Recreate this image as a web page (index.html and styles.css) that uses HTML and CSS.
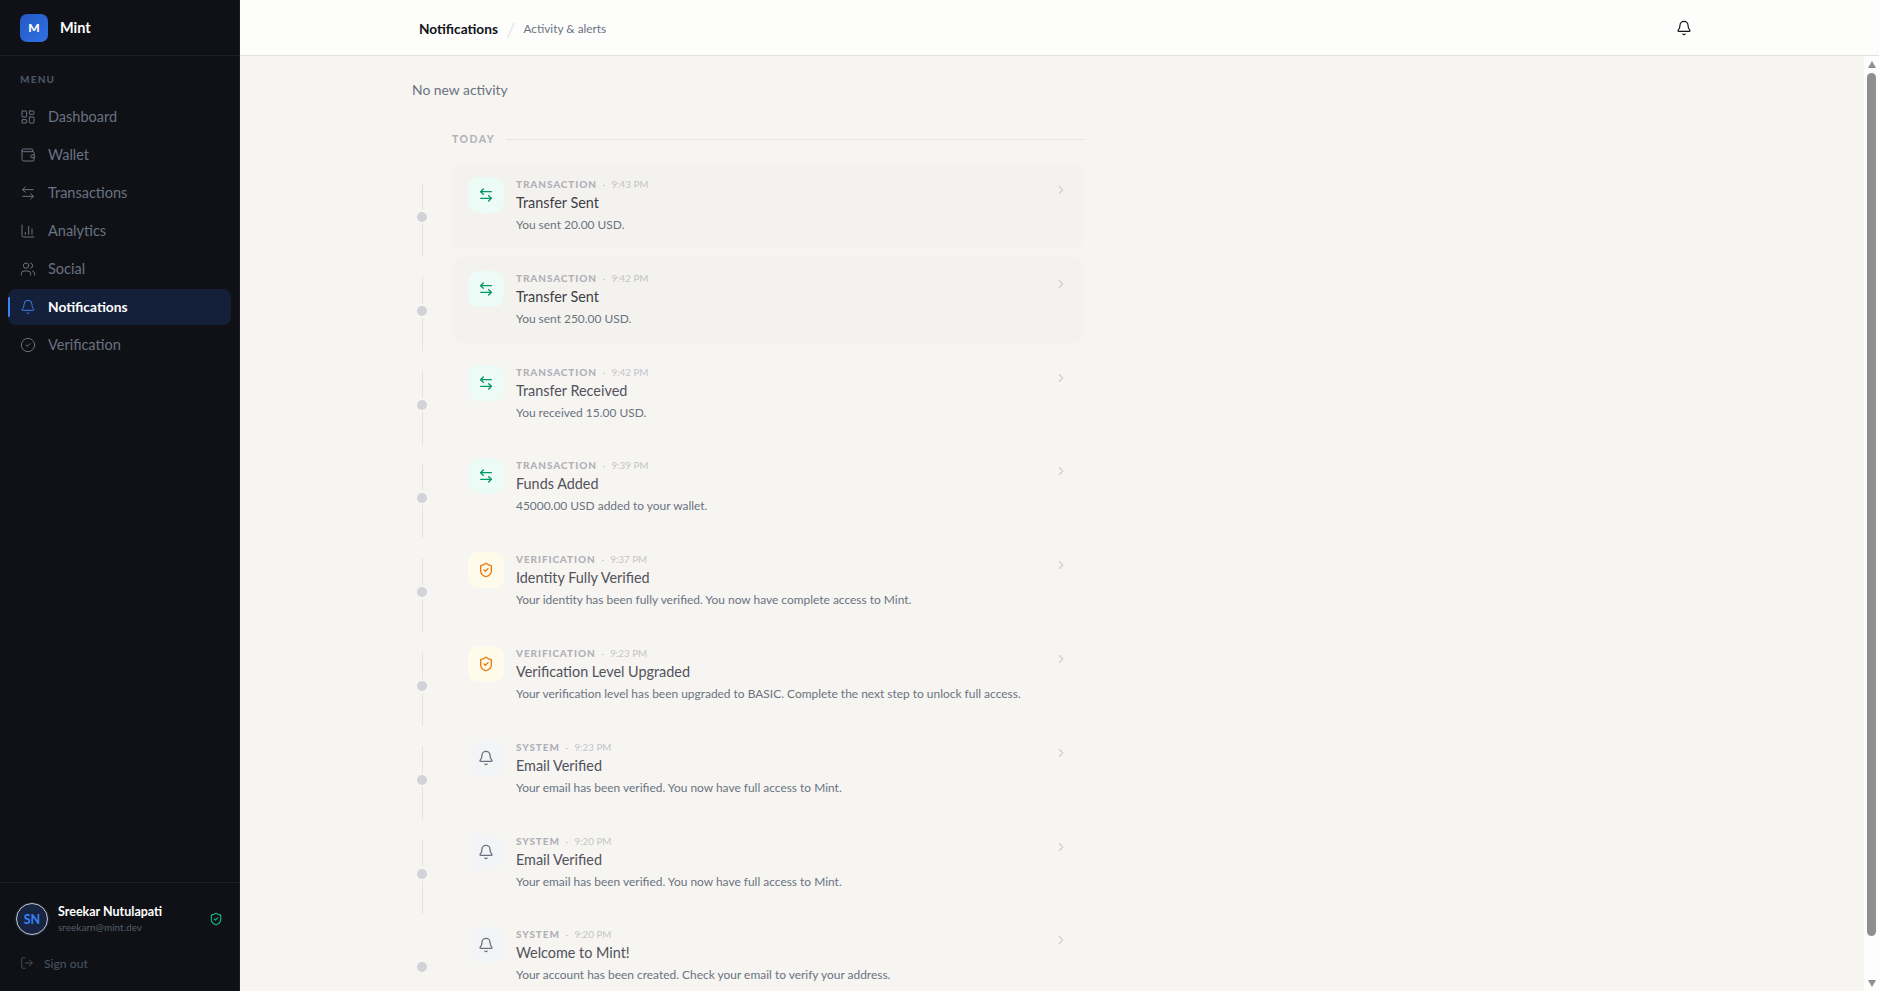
FILE: index.html
```html
<!DOCTYPE html>
<html lang="en">
<head>
<meta charset="utf-8">
<title>Mint - Notifications</title>
<link rel="stylesheet" href="styles.css">
</head>
<body>
<svg class="defs" width="0" height="0" aria-hidden="true">
  <symbol id="i-dash" viewBox="0 0 24 24"><rect x="3" y="3" width="7" height="9" rx="1"/><rect x="14" y="3" width="7" height="5" rx="1"/><rect x="14" y="12" width="7" height="9" rx="1"/><rect x="3" y="16" width="7" height="5" rx="1"/></symbol>
  <symbol id="i-wallet" viewBox="0 0 24 24"><path d="M19 7V4a1 1 0 0 0-1-1H5a2 2 0 0 0 0 4h15a1 1 0 0 1 1 1v4h-3a2 2 0 0 0 0 4h3a1 1 0 0 0 1-1v-2a1 1 0 0 0-1-1"/><path d="M3 5v14a2 2 0 0 0 2 2h15a1 1 0 0 0 1-1v-4"/></symbol>
  <symbol id="i-swap" viewBox="0 0 24 24"><path d="M8 3 4 7l4 4"/><path d="M4 7h16"/><path d="m16 21 4-4-4-4"/><path d="M20 17H4"/></symbol>
  <symbol id="i-chart" viewBox="0 0 24 24"><path d="M3 3v16a2 2 0 0 0 2 2h16"/><path d="M18 17V9"/><path d="M13 17V5"/><path d="M8 17v-3"/></symbol>
  <symbol id="i-users" viewBox="0 0 24 24"><path d="M16 21v-2a4 4 0 0 0-4-4H6a4 4 0 0 0-4 4v2"/><circle cx="9" cy="7" r="4"/><path d="M22 21v-2a4 4 0 0 0-3-3.87"/><path d="M16 3.13a4 4 0 0 1 0 7.75"/></symbol>
  <symbol id="i-bell" viewBox="0 0 24 24"><path d="M10.268 21a2 2 0 0 0 3.464 0"/><path d="M3.262 15.326A1 1 0 0 0 4 17h16a1 1 0 0 0 .74-1.673C19.41 13.956 18 12.499 18 8A6 6 0 0 0 6 8c0 4.499-1.411 5.956-2.738 7.326"/></symbol>
  <symbol id="i-check" viewBox="0 0 24 24"><circle cx="12" cy="12" r="10"/><path d="m9 12 2 2 4-4"/></symbol>
  <symbol id="i-shield" viewBox="0 0 24 24"><path d="M20 13c0 5-3.5 7.5-7.66 8.95a1 1 0 0 1-.67-.01C7.5 20.5 4 18 4 13V6a1 1 0 0 1 1-1c2 0 4.5-1.2 6.24-2.72a1.17 1.17 0 0 1 1.52 0C14.51 3.81 17 5 19 5a1 1 0 0 1 1 1z"/><path d="m9 12 2 2 4-4"/></symbol>
  <symbol id="i-out" viewBox="0 0 24 24"><path d="M9 21H5a2 2 0 0 1-2-2V5a2 2 0 0 1 2-2h4"/><path d="m16 17 5-5-5-5"/><path d="M21 12H9"/></symbol>
  <symbol id="i-chev" viewBox="0 0 24 24"><path d="m9 18 6-6-6-6"/></symbol>
</svg>
<div class="app">
  <aside class="sidebar">
    <div class="brand"><span class="logo">M</span><span class="brand-name">Mint</span></div>
    <nav class="nav">
      <div class="nav-label">MENU</div>
      <a class="nav-item"><svg class="ico"><use href="#i-dash"/></svg>Dashboard</a>
      <a class="nav-item"><svg class="ico"><use href="#i-wallet"/></svg>Wallet</a>
      <a class="nav-item"><svg class="ico"><use href="#i-swap"/></svg>Transactions</a>
      <a class="nav-item"><svg class="ico"><use href="#i-chart"/></svg>Analytics</a>
      <a class="nav-item"><svg class="ico"><use href="#i-users"/></svg>Social</a>
      <a class="nav-item active"><svg class="ico"><use href="#i-bell"/></svg>Notifications</a>
      <a class="nav-item"><svg class="ico"><use href="#i-check"/></svg>Verification</a>
    </nav>
    <div class="foot">
      <div class="user">
        <span class="avatar">SN</span>
        <div class="user-text">
          <div class="user-name">Sreekar Nutulapati</div>
          <div class="user-mail">sreekarn@mint.dev</div>
        </div>
        <svg class="ico ico-green"><use href="#i-shield"/></svg>
      </div>
      <a class="signout"><svg class="ico ico-sm"><use href="#i-out"/></svg>Sign out</a>
    </div>
  </aside>
  <div class="right">
    <header class="top">
      <div class="top-inner">
        <span class="crumb">Notifications</span>
        <span class="slash">/</span>
        <span class="crumb-sub">Activity &amp; alerts</span>
        <svg class="ico top-bell"><use href="#i-bell"/></svg>
      </div>
    </header>
    <div class="body">
      <main class="main">
        <p class="status">No new activity</p>
        <div class="feed">
          <div class="day"><span class="day-label">TODAY</span><span class="day-line"></span></div>

          <div class="row">
            <div class="rail"><span class="seg seg-a"></span><span class="dot"></span><span class="seg seg-b"></span></div>
            <article class="card unread">
              <span class="tile tile-green"><svg class="ico"><use href="#i-swap"/></svg></span>
              <div class="txt">
                <div class="meta"><span class="kind">TRANSACTION</span><span class="sep">·</span><span class="time">9:43 PM</span></div>
                <h3 class="title">Transfer Sent</h3>
                <p class="desc">You sent 20.00 USD.</p>
              </div>
              <svg class="ico chev"><use href="#i-chev"/></svg>
            </article>
          </div>

          <div class="row">
            <div class="rail"><span class="seg seg-a"></span><span class="dot"></span><span class="seg seg-b"></span></div>
            <article class="card unread">
              <span class="tile tile-green"><svg class="ico"><use href="#i-swap"/></svg></span>
              <div class="txt">
                <div class="meta"><span class="kind">TRANSACTION</span><span class="sep">·</span><span class="time">9:42 PM</span></div>
                <h3 class="title">Transfer Sent</h3>
                <p class="desc">You sent 250.00 USD.</p>
              </div>
              <svg class="ico chev"><use href="#i-chev"/></svg>
            </article>
          </div>

          <div class="row">
            <div class="rail"><span class="seg seg-a"></span><span class="dot"></span><span class="seg seg-b"></span></div>
            <article class="card">
              <span class="tile tile-green"><svg class="ico"><use href="#i-swap"/></svg></span>
              <div class="txt">
                <div class="meta"><span class="kind">TRANSACTION</span><span class="sep">·</span><span class="time">9:42 PM</span></div>
                <h3 class="title">Transfer Received</h3>
                <p class="desc">You received 15.00 USD.</p>
              </div>
              <svg class="ico chev"><use href="#i-chev"/></svg>
            </article>
          </div>

          <div class="row">
            <div class="rail"><span class="seg seg-a"></span><span class="dot"></span><span class="seg seg-b"></span></div>
            <article class="card">
              <span class="tile tile-green"><svg class="ico"><use href="#i-swap"/></svg></span>
              <div class="txt">
                <div class="meta"><span class="kind">TRANSACTION</span><span class="sep">·</span><span class="time">9:39 PM</span></div>
                <h3 class="title">Funds Added</h3>
                <p class="desc">45000.00 USD added to your wallet.</p>
              </div>
              <svg class="ico chev"><use href="#i-chev"/></svg>
            </article>
          </div>

          <div class="row">
            <div class="rail"><span class="seg seg-a"></span><span class="dot"></span><span class="seg seg-b"></span></div>
            <article class="card">
              <span class="tile tile-amber"><svg class="ico"><use href="#i-shield"/></svg></span>
              <div class="txt">
                <div class="meta"><span class="kind">VERIFICATION</span><span class="sep">·</span><span class="time">9:37 PM</span></div>
                <h3 class="title">Identity Fully Verified</h3>
                <p class="desc">Your identity has been fully verified. You now have complete access to Mint.</p>
              </div>
              <svg class="ico chev"><use href="#i-chev"/></svg>
            </article>
          </div>

          <div class="row">
            <div class="rail"><span class="seg seg-a"></span><span class="dot"></span><span class="seg seg-b"></span></div>
            <article class="card">
              <span class="tile tile-amber"><svg class="ico"><use href="#i-shield"/></svg></span>
              <div class="txt">
                <div class="meta"><span class="kind">VERIFICATION</span><span class="sep">·</span><span class="time">9:23 PM</span></div>
                <h3 class="title">Verification Level Upgraded</h3>
                <p class="desc">Your verification level has been upgraded to BASIC. Complete the next step to unlock full access.</p>
              </div>
              <svg class="ico chev"><use href="#i-chev"/></svg>
            </article>
          </div>

          <div class="row">
            <div class="rail"><span class="seg seg-a"></span><span class="dot"></span><span class="seg seg-b"></span></div>
            <article class="card">
              <span class="tile tile-gray"><svg class="ico"><use href="#i-bell"/></svg></span>
              <div class="txt">
                <div class="meta"><span class="kind">SYSTEM</span><span class="sep">·</span><span class="time">9:23 PM</span></div>
                <h3 class="title">Email Verified</h3>
                <p class="desc">Your email has been verified. You now have full access to Mint.</p>
              </div>
              <svg class="ico chev"><use href="#i-chev"/></svg>
            </article>
          </div>

          <div class="row">
            <div class="rail"><span class="seg seg-a"></span><span class="dot"></span><span class="seg seg-b"></span></div>
            <article class="card">
              <span class="tile tile-gray"><svg class="ico"><use href="#i-bell"/></svg></span>
              <div class="txt">
                <div class="meta"><span class="kind">SYSTEM</span><span class="sep">·</span><span class="time">9:20 PM</span></div>
                <h3 class="title">Email Verified</h3>
                <p class="desc">Your email has been verified. You now have full access to Mint.</p>
              </div>
              <svg class="ico chev"><use href="#i-chev"/></svg>
            </article>
          </div>

          <div class="row">
            <div class="rail"><span class="seg seg-a seg-none"></span><span class="dot"></span></div>
            <article class="card">
              <span class="tile tile-gray"><svg class="ico"><use href="#i-bell"/></svg></span>
              <div class="txt">
                <div class="meta"><span class="kind">SYSTEM</span><span class="sep">·</span><span class="time">9:20 PM</span></div>
                <h3 class="title">Welcome to Mint!</h3>
                <p class="desc">Your account has been created. Check your email to verify your address.</p>
              </div>
              <svg class="ico chev"><use href="#i-chev"/></svg>
            </article>
          </div>
        </div>
      </main>
      <div class="scrollbar" aria-hidden="true">
        <span class="arrow arrow-up"></span>
        <span class="thumb"></span>
        <span class="arrow arrow-down"></span>
      </div>
    </div>
  </div>
</div>
</body>
</html>
```
FILE: styles.css
```css
* { box-sizing: border-box; }
html, body { height: 100%; margin: 0; overflow: hidden; }
body { font-family: "Lato", "Noto Sans", sans-serif; background: #f6f5f2; color: #3f3f46; }
.defs { position: absolute; }
a { display: flex; text-decoration: none; }
h3, p { margin: 0; }

.ico { width: 16px; height: 16px; flex: none; fill: none; stroke: currentColor; stroke-width: 1.5; stroke-linecap: round; stroke-linejoin: round; }

.app { display: flex; height: 991px; }

/* sidebar */
.sidebar { width: 240px; flex: none; display: flex; flex-direction: column; background: #0f1117; border-right: 1px solid #1a1c26; }
.brand { height: 56px; flex: none; display: flex; align-items: center; gap: 12px; padding-left: 20px; border-bottom: 1px solid #1d1f2b; }
.logo { width: 28px; height: 28px; border-radius: 7px; display: flex; align-items: center; justify-content: center; background: linear-gradient(135deg, #2358c4, #3171e4); color: #fff; font-size: 12px; font-weight: 900; }
.brand-name { color: #fff; font-size: 14.5px; font-weight: 700; }
.nav { flex: 1; display: flex; flex-direction: column; gap: 2px; padding: 16px 8px 0; }
.nav-label { height: 15px; line-height: 15px; margin: 0 0 9.5px 12px; color: #4b5563; font-size: 10px; font-weight: 900; letter-spacing: .12em; }
.nav-item { height: 36px; display: flex; align-items: center; gap: 12px; padding-left: 12px; border-radius: 8px; color: #6b7280; font-size: 14.5px; position: relative; }
.nav-item.active { background: #14203a; color: #fff; font-size: 13.8px; font-weight: 700; }
.nav-item.active .ico { color: #3b82f6; }
.nav-item.active::before { content: ""; position: absolute; left: 0; top: 8px; width: 2px; height: 20px; border-radius: 2px; background: #3b82f6; }

.foot { height: 109px; flex: none; border-top: 1px solid #1f2030; padding: 19px 16px 0; }
.user { display: flex; align-items: center; gap: 10px; height: 34px; }
.avatar { width: 32px; height: 32px; flex: none; border-radius: 50%; display: flex; align-items: center; justify-content: center; background: #172542; border: 1px solid #c4c7cf; box-shadow: 0 0 0 1px #1d2030; color: #3b82f6; font-size: 12.5px; font-weight: 700; }
.user-text { flex: 1; min-width: 0; }
.user-name { color: #fff; font-size: 12.5px; font-weight: 700; line-height: 16px; }
.user-mail { color: #565e6b; font-size: 10px; line-height: 14px; }
.ico-green { width: 14px; height: 14px; color: #10b981; stroke-width: 2; }
.signout { align-items: center; gap: 10px; margin-top: 17px; padding-left: 4px; height: 20px; color: #4b5563; font-size: 12.2px; }
.ico-sm { width: 14px; height: 14px; }

/* top bar */
.right { flex: 1; min-width: 0; display: flex; flex-direction: column; }
.top { height: 56px; flex: none; background: #fdfdfc; border-bottom: 1px solid #e4e2de; padding-right: 15px; }
.top-inner { width: 1280px; height: 55px; margin: 0 auto; padding: 2px 0 0 7px; display: flex; align-items: center; }
.crumb { color: #111318; font-size: 13.7px; font-weight: 700; }
.slash { width: 25.6px; text-align: center; color: #d9d8d4; font-size: 20px; font-weight: 300; }
.crumb-sub { color: #6b7280; font-size: 11.8px; }
.top-bell { margin: -2px 0 0 auto; color: #111318; stroke-width: 1.75; }

/* body */
.body { flex: 1; min-height: 0; display: flex; }
.main { flex: 1; min-width: 0; overflow: hidden; padding: 0 172px; }
.status { margin-top: 25px; height: 18px; line-height: 18px; color: #6b7280; font-size: 13.9px; }
.feed { width: 672px; margin-top: 28px; }
.day { height: 24px; margin: 0 0 12px 40px; display: flex; align-items: center; gap: 11px; }
.day-label { color: #b4b4ba; font-size: 10.5px; font-weight: 900; letter-spacing: .14em; }
.day-line { flex: 1; height: 1px; background: #e6e5e1; }

.row { display: flex; height: 93.8px; }
.rail { width: 20px; flex: none; margin-right: 20px; padding-top: 20px; display: flex; flex-direction: column; align-items: center; }
.seg { width: 1px; background: #e3e2de; flex: none; }
.seg-a { height: 27px; margin-bottom: 2px; }
.seg-b { height: 33px; margin-top: 2px; }
.seg-none { background: transparent; }
.dot { width: 10px; height: 10px; flex: none; border-radius: 50%; background: #d2d2d9; }

.card { flex: 1; min-width: 0; height: 85.8px; display: flex; gap: 12px; padding: 14px 16px; border-radius: 12px; color: #52525b; }
.card.unread { background: #f3f2ef; color: #3f3f46; }
.tile { width: 36px; height: 36px; flex: none; border-radius: 10px; display: flex; align-items: center; justify-content: center; }
.tile .ico { stroke-width: 2; }
.tile-green { background: #ecfbf5; color: #059669; }
.tile-amber { background: #fffbeb; color: #ea7a0c; }
.tile-gray { background: #f3f4f6; color: #6b7280; }
.txt { flex: 1; min-width: 0; }
.meta { height: 14px; display: flex; align-items: center; font-size: 9.8px; color: #c4c4ca; }
.kind { color: #b0b0b8; font-size: 10px; font-weight: 900; letter-spacing: .09em; }
.sep { margin: 0 6px; }
.title { margin-top: 2px; font-size: 14.4px; font-weight: 400; line-height: 20px; }
.desc { margin-top: 4px; color: #6b7280; font-size: 11.95px; line-height: 16px; }
.chev { width: 14px; height: 14px; color: #cfcfcf; stroke-width: 2; margin-top: 6px; }

/* scrollbar */
.scrollbar { width: 15px; flex: none; background: #fdfdfd; display: flex; flex-direction: column; align-items: center; padding: 5px 0 4px; }
.thumb { width: 9px; flex: 1; margin: 5px 0 44px; border-radius: 5px; background: #8f8f8f; }
.arrow { width: 0; height: 0; border-left: 4.5px solid transparent; border-right: 4.5px solid transparent; }
.arrow-up { border-bottom: 7px solid #8f8f8f; }
.arrow-down { border-top: 7px solid #8f8f8f; }
```
